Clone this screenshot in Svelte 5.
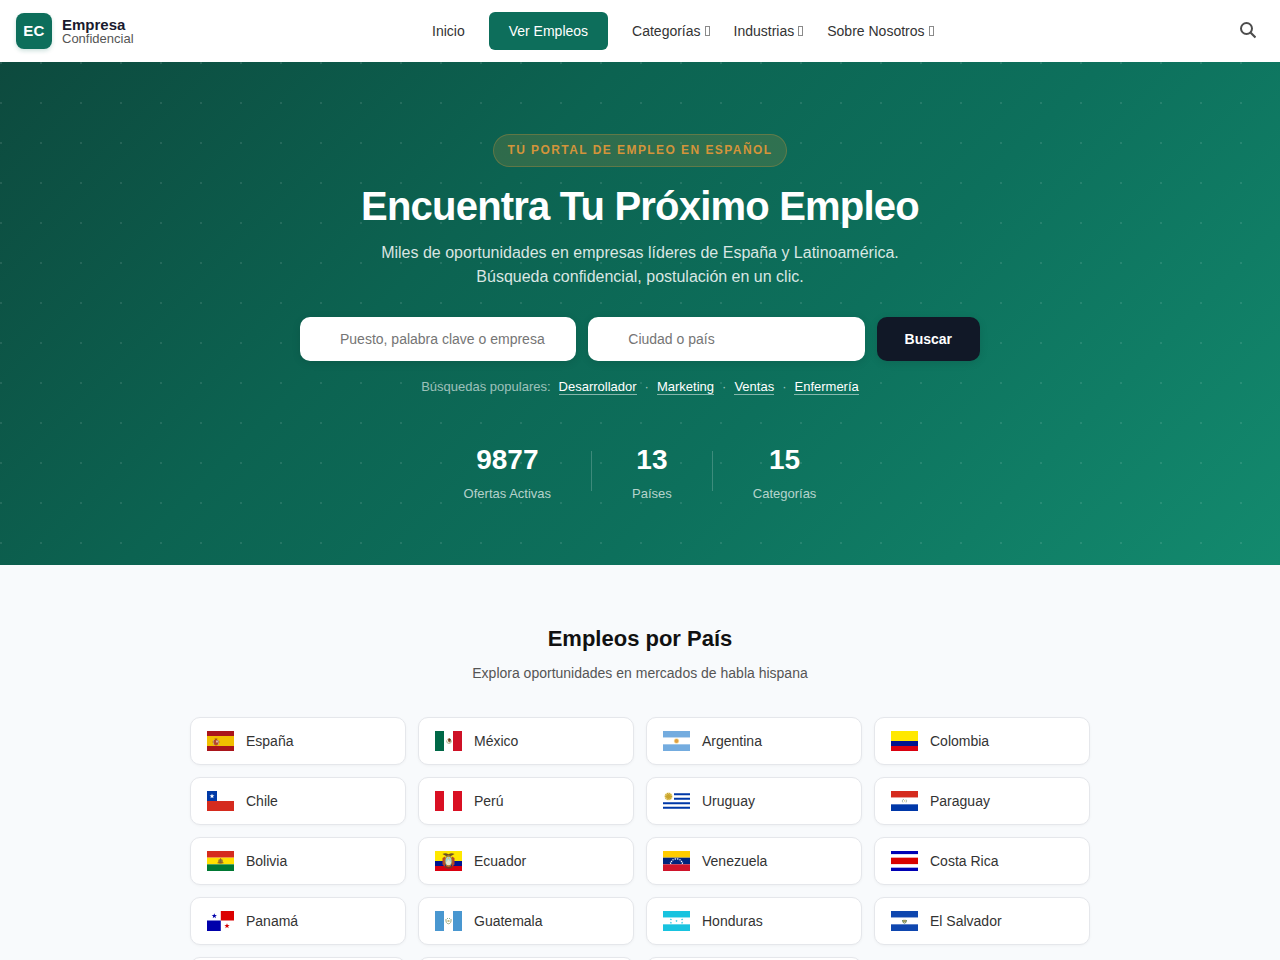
<script>
    let keyword = '';
    let place = '';

    const menus = ['Categorías', 'Industrias', 'Sobre Nosotros'];
    const popular = ['Desarrollador', 'Marketing', 'Ventas', 'Enfermería'];

    const stats = [
        { value: '9877', label: 'Ofertas Activas' },
        { value: '13', label: 'Países' },
        { value: '15', label: 'Categorías' }
    ];

    // horizontal stripes: [color, height] pairs
    function rows(...bands) {
        let y = 0;
        return bands.map(([color, size]) => {
            const rect = `<rect y="${y}" width="27" height="${size}" fill="${color}"/>`;
            y += size;
            return rect;
        }).join('');
    }

    function cols(left, middle, right) {
        return [left, middle, right]
            .map((color, i) => `<rect x="${i * 9}" width="9" height="20" fill="${color}"/>`)
            .join('');
    }

    function star(x, y, r, color) {
        const points = [];
        for (let i = 0; i < 10; i++) {
            const radius = i % 2 ? r * 0.4 : r;
            const angle = -Math.PI / 2 + (i * Math.PI) / 5;
            points.push(`${(x + radius * Math.cos(angle)).toFixed(2)},${(y + radius * Math.sin(angle)).toFixed(2)}`);
        }
        return `<polygon points="${points.join(' ')}" fill="${color}"/>`;
    }

    function stars(list, r, color) {
        return list.map(([x, y]) => star(x, y, r, color)).join('');
    }

    const countries = [
        {
            name: 'España',
            flag: rows(['#aa151b', 5], ['#f1bf00', 10], ['#aa151b', 5]) +
                '<path d="M6 9h1v5H6zM11 9h1v5h-1z" fill="#c9a36b"/><path d="M7 9h4v3.500a2 2 0 0 1-4 0z" fill="#b5452f"/><path d="M7.500 7.500h3l-.5 1.500H8z" fill="#a8501d"/><path d="M9 9.500h2v2H9z" fill="#d8b0a5"/><path d="M5.500 10.500h1v1h-1zM11.500 10.500h1v1h-1z" fill="#a8402d"/>'
        },
        {
            name: 'México',
            flag: cols('#006847', '#fff', '#ce1126') +
                '<path d="M11.500 9.500q0 3 2.500 3t2.500-3" fill="none" stroke="#9aa878" stroke-width=".8"/><path d="M12.500 8l2-1 1.500 1.500-.5 2.500-1.500.5-1-1.500z" fill="#8c5a36"/><path d="M14 8h1.500v1.500H14z" fill="#4e3020"/>'
        },
        {
            name: 'Argentina',
            flag: rows(['#74acdf', 6.67], ['#fff', 6.66], ['#74acdf', 6.67]) +
                '<circle cx="13.5" cy="10" r="2.700" fill="#f6b40e" opacity=".35"/><circle cx="13.5" cy="10" r="2" fill="#dfa044"/>'
        },
        {
            name: 'Colombia',
            flag: rows(['#ffe800', 10], ['#00148e', 5], ['#da0010', 5])
        },
        {
            name: 'Chile',
            flag: rows(['#fff', 10], ['#d52b1e', 10]) +
                '<rect width="10" height="10" fill="#0039a6"/>' + star(5, 5.2, 2.6, '#fff')
        },
        {
            name: 'Perú',
            flag: cols('#d91023', '#fff', '#d91023')
        },
        {
            name: 'Uruguay',
            flag: '<rect width="27" height="20" fill="#fff"/><path d="M11 2.200h16v2H11zM11 6.700h16v2H11zM0 11.200h27v2H0zM0 15.700h27v2H0z" fill="#0038a8"/>' +
                '<circle cx="5.500" cy="5.400" r="4" fill="#f0d878" opacity=".55"/><circle cx="5.500" cy="5.400" r="3.100" fill="none" stroke="#c8a52c" stroke-width="1.200" stroke-dasharray="1.2 .6"/><circle cx="5.500" cy="5.400" r="2.500" fill="#c9a42a"/>'
        },
        {
            name: 'Paraguay',
            flag: rows(['#d52b1e', 6.67], ['#fff', 6.66], ['#0038a8', 6.67]) +
                '<path d="M12 11.500a2 2 0 0 1 0-3h1M15 8.500q1.200 1.200 0 3" fill="none" stroke="#9bac9c" stroke-width=".8"/><path d="M13 9.200h1.200v1.200H13z" fill="#d5c583"/>'
        },
        {
            name: 'Bolivia',
            flag: rows(['#d52b1e', 6.67], ['#ffe000', 6.66], ['#007934', 6.67]) +
                '<circle cx="13.5" cy="10.200" r="2.500" fill="#b08a25"/><path d="M12.500 9h2v2.500h-2z" fill="#7b6742"/><path d="M10.500 11.800h6M13.500 7.300v1.500" stroke="#8a4c22" stroke-width=".8"/>'
        },
        {
            name: 'Ecuador',
            flag: rows(['#ffe800', 10], ['#00148e', 5], ['#da0010', 5]) +
                '<path d="M7.500 3q3-1.500 6 .2 3-1.700 6-.2l-3.500 2h-5z" fill="#6b5126"/><path d="M7.500 7l2.500-1.500v10.500l-2.500-2.500zM19.500 7l-2.500-1.500v10.500l2.500-2.500z" fill="#b5442b"/><ellipse cx="13.5" cy="10" rx="4" ry="6" fill="#a8812d"/><ellipse cx="13.5" cy="10" rx="3" ry="4.300" fill="#a9d5d2"/><path d="M11 11.500l2.500-3 2.500 3-1 2.500h-3z" fill="#e6e5cf"/><path d="M9.500 15.500q4 3 8 0" fill="none" stroke="#6f3c25" stroke-width="1.400"/><circle cx="13.5" cy="7.200" r=".8" fill="#f2cf3b"/>'
        },
        {
            name: 'Venezuela',
            flag: rows(['#fc0', 6.67], ['#00247d', 6.66], ['#cf142b', 6.67]) +
                stars([[7.6, 12.2], [8.5, 10.4], [10, 8.8], [12.3, 8], [14.7, 8], [17, 8.8], [18.5, 10.4], [19.4, 12.2]], 1.2, '#fff')
        },
        {
            name: 'Costa Rica',
            flag: rows(['#0000b4', 3.33], ['#fff', 3.33], ['#d90000', 6.68], ['#fff', 3.33], ['#0000b4', 3.33])
        },
        {
            name: 'Panamá',
            flag: '<rect width="27" height="20" fill="#fff"/><path d="M13.800 0H27v9.500H13.800z" fill="#db0000"/><path d="M0 9.500h13.800V20H0z" fill="#0000ab"/>' +
                star(7.3, 5, 2.8, '#0000ab') + star(20, 15, 2.8, '#d80000')
        },
        {
            name: 'Guatemala',
            flag: cols('#4997d0', '#fff', '#4997d0') +
                '<path d="M11 8q-.5 4.500 2.500 4.800 3-.3 2.500-4.800" fill="none" stroke="#9eaa80" stroke-width="1"/><path d="M12 7h1v1h-1zM14 7h1v1h-1z" fill="#8caf91"/><path d="M12.500 9h2v2h-2z" fill="#c8bd88"/>'
        },
        {
            name: 'Honduras',
            flag: rows(['#18c3df', 6.67], ['#fff', 6.66], ['#18c3df', 6.67]) +
                stars([[7.9, 8.4], [7.9, 11.7], [13.5, 10], [19.1, 8.4], [19.1, 11.7]], 1.2, '#18c3df')
        },
        {
            name: 'El Salvador',
            flag: rows(['#0f47af', 6.67], ['#fff', 6.66], ['#0f47af', 6.67]) +
                '<path d="M11.500 9q0 3.200 2 3.200t2-3.200" fill="none" stroke="#628a63" stroke-width="1"/><path d="M12 8.800h3v2.500h-3z" fill="#a09b61"/>'
        },
        {
            name: 'Nicaragua',
            flag: rows(['#0067c6', 6.67], ['#fff', 6.66], ['#0067c6', 6.67])
        },
        {
            name: 'República Dominicana',
            flag: '<rect width="27" height="20" fill="#fff"/><path d="M0 0h11.500v8H0zM15.500 12H27v8H15.500z" fill="#002d62"/><path d="M15.500 0H27v8H15.500zM0 12h11.500v8H0z" fill="#ce1126"/>'
        },
        {
            name: 'Puerto Rico',
            flag: rows(['#ed0000', 4], ['#fff', 4], ['#ed0000', 4], ['#fff', 4], ['#ed0000', 4]) +
                '<path d="M0 0l13 10L0 20z" fill="#0050f0"/>' + star(4.5, 10, 3, '#fff')
        }
    ];
</script>

<header>
    <a class="logo" href="#inicio">
        <span class="logo-mark">EC</span>
        <span class="logo-text">
            <strong>Empresa</strong>
            <span>Confidencial</span>
        </span>
    </a>
    <nav>
        <a href="#inicio">Inicio</a>
        <a class="nav-button" href="#empleos">Ver Empleos</a>
        {#each menus as menu}
            <a class="menu" href="#menu">{menu}<span class="caret"></span></a>
        {/each}
    </nav>
    <button class="search-toggle" type="button" aria-label="Buscar en el sitio">
        <svg viewBox="0 0 16 18" width="16" height="18" fill="none" stroke="#4d4d4d" stroke-width="2">
            <circle cx="6.500" cy="6.500" r="5.500" />
            <path d="M10.500 10.500l5 5" stroke-width="2.200" />
        </svg>
    </button>
</header>

<main>
    <section class="hero">
        <span class="badge">TU PORTAL DE EMPLEO EN ESPAÑOL</span>
        <h1>Encuentra Tu Próximo Empleo</h1>
        <p class="lead">
            Miles de oportunidades en empresas líderes de España y Latinoamérica. Búsqueda confidencial, postulación en un clic.
        </p>

        <form on:submit|preventDefault>
            <input type="text" bind:value={keyword} placeholder="Puesto, palabra clave o empresa" aria-label="Puesto, palabra clave o empresa" />
            <input type="text" bind:value={place} placeholder="Ciudad o país" aria-label="Ciudad o país" />
            <button type="submit">Buscar</button>
        </form>

        <div class="popular">
            <span>Búsquedas populares:</span>
            {#each popular as term, i}
                {#if i > 0}<span>·</span>{/if}
                <a href="#buscar">{term}</a>
            {/each}
        </div>

        <div class="stats">
            {#each stats as stat, i}
                {#if i > 0}<div class="divider"></div>{/if}
                <div class="stat">
                    <strong>{stat.value}</strong>
                    <span>{stat.label}</span>
                </div>
            {/each}
        </div>
    </section>

    <section class="countries">
        <h2>Empleos por País</h2>
        <p>Explora oportunidades en mercados de habla hispana</p>
        <div class="grid">
            {#each countries as country}
                <a class="card" href="#pais">
                    <svg viewBox="0 0 27 20" width="27" height="20" aria-hidden="true">{@html country.flag}</svg>
                    <span>{country.name}</span>
                </a>
            {/each}
        </div>
    </section>
</main>

<style>
    :global(body) {
        margin: 0;
        background: #f8fafc;
        color: #333;
        font-family: "Liberation Sans", Arial, sans-serif;
        font-size: 14px;
        line-height: 22px;
    }

    a {
        color: inherit;
        text-decoration: none;
    }

    header {
        display: flex;
        align-items: center;
        justify-content: space-between;
        padding: 12px 16px;
        background: #fff;
    }

    .logo {
        display: flex;
        align-items: center;
        gap: 10px;
    }

    .logo-mark {
        width: 36px;
        height: 36px;
        border-radius: 8px;
        background: #0d6e5b;
        box-shadow: 0 2px 4px rgba(13, 110, 91, 0.2);
        color: #fff;
        font-size: 15px;
        font-weight: 700;
        letter-spacing: 0.03em;
        line-height: 36px;
        text-align: center;
    }

    .logo-text {
        display: flex;
        flex-direction: column;
        padding-top: 2px;
        color: #555;
        font-size: 13px;
        line-height: 14px;
    }

    .logo-text strong {
        color: #1a1a2e;
        font-size: 15px;
    }

    nav {
        display: flex;
        align-items: center;
        gap: 24px;
    }

    .nav-button {
        padding: 8px 20px;
        border-radius: 6px;
        background: #0d6e5b;
        color: #fff;
    }

    .menu {
        display: flex;
        align-items: center;
        gap: 4px;
    }

    .caret {
        width: 3px;
        height: 8px;
        border: 1px solid #8a8a8a;
    }

    .search-toggle {
        display: flex;
        padding: 8px;
        border: none;
        background: none;
        cursor: pointer;
    }

    .hero {
        display: flex;
        flex-direction: column;
        align-items: center;
        padding: 72px 20px 60px;
        background:
            radial-gradient(circle at 1px 1px, rgba(255, 255, 255, 0.1) 1px, transparent 0) 0 0 / 40px 40px,
            linear-gradient(135deg, #0d4a3e 0%, #0c6351 35%, #0d705c 62%, #138a6e 100%);
        color: #fff;
        text-align: center;
    }

    .badge {
        padding: 6px 13px;
        border: 1px solid rgba(212, 148, 58, 0.3);
        border-radius: 20px;
        background: rgba(212, 148, 58, 0.18);
        color: #d4943a;
        font-size: 12px;
        font-weight: 700;
        letter-spacing: 0.12em;
        line-height: 19px;
    }

    h1 {
        margin: 16px 0 12px;
        font-size: 40px;
        letter-spacing: -0.02em;
        line-height: 46px;
    }

    .lead {
        max-width: 560px;
        margin: 0 0 28px;
        color: rgba(255, 255, 255, 0.85);
        font-size: 16px;
        line-height: 24px;
    }

    form {
        display: flex;
        gap: 12px;
        width: 100%;
        max-width: 680px;
    }

    input {
        flex: 1;
        min-width: 0;
        height: 44px;
        box-sizing: border-box;
        padding: 0 16px 0 40px;
        border: none;
        border-radius: 10px;
        background: #fff;
        box-shadow: 0 2px 8px rgba(0, 0, 0, 0.1);
        font: inherit;
    }

    input::placeholder {
        color: #757575;
    }

    form button {
        padding: 0 28px;
        border: none;
        border-radius: 10px;
        background: #111827;
        box-shadow: 0 2px 8px rgba(0, 0, 0, 0.1);
        color: #fff;
        font: inherit;
        font-weight: 700;
        cursor: pointer;
    }

    .popular {
        display: flex;
        flex-wrap: wrap;
        justify-content: center;
        gap: 8px;
        margin: 16px 0 40px;
        color: rgba(255, 255, 255, 0.6);
        font-size: 13px;
        line-height: 20px;
    }

    .popular a {
        height: 17px;
        border-bottom: 1px solid rgba(255, 255, 255, 0.5);
        color: #fff;
    }

    .stats {
        display: flex;
        align-items: center;
        gap: 40px;
    }

    .stat {
        display: flex;
        flex-direction: column;
    }

    .stat strong {
        font-size: 28px;
        line-height: 46px;
    }

    .stat span {
        color: rgba(255, 255, 255, 0.7);
        font-size: 13px;
    }

    .divider {
        width: 1px;
        height: 40px;
        background: rgba(255, 255, 255, 0.2);
    }

    .countries {
        max-width: 900px;
        margin: 0 auto;
        padding: 60px 20px;
        text-align: center;
    }

    h2 {
        margin: 0 0 9px;
        color: #111;
        font-size: 22px;
        line-height: 28px;
    }

    .countries p {
        margin: 0 0 33px;
        color: #555;
    }

    .grid {
        display: grid;
        grid-template-columns: repeat(4, 1fr);
        gap: 12px;
    }

    .card {
        display: flex;
        align-items: center;
        gap: 12px;
        padding: 12px 16px;
        border: 1px solid #e5e7eb;
        border-radius: 10px;
        background: #fff;
        box-shadow: 0 1px 3px rgba(0, 0, 0, 0.04);
        text-align: left;
    }

    @media (max-width: 800px) {
        header {
            flex-wrap: wrap;
        }

        form {
            flex-direction: column;
        }

        form button {
            height: 44px;
        }

        .grid {
            grid-template-columns: repeat(2, 1fr);
        }
    }
</style>
